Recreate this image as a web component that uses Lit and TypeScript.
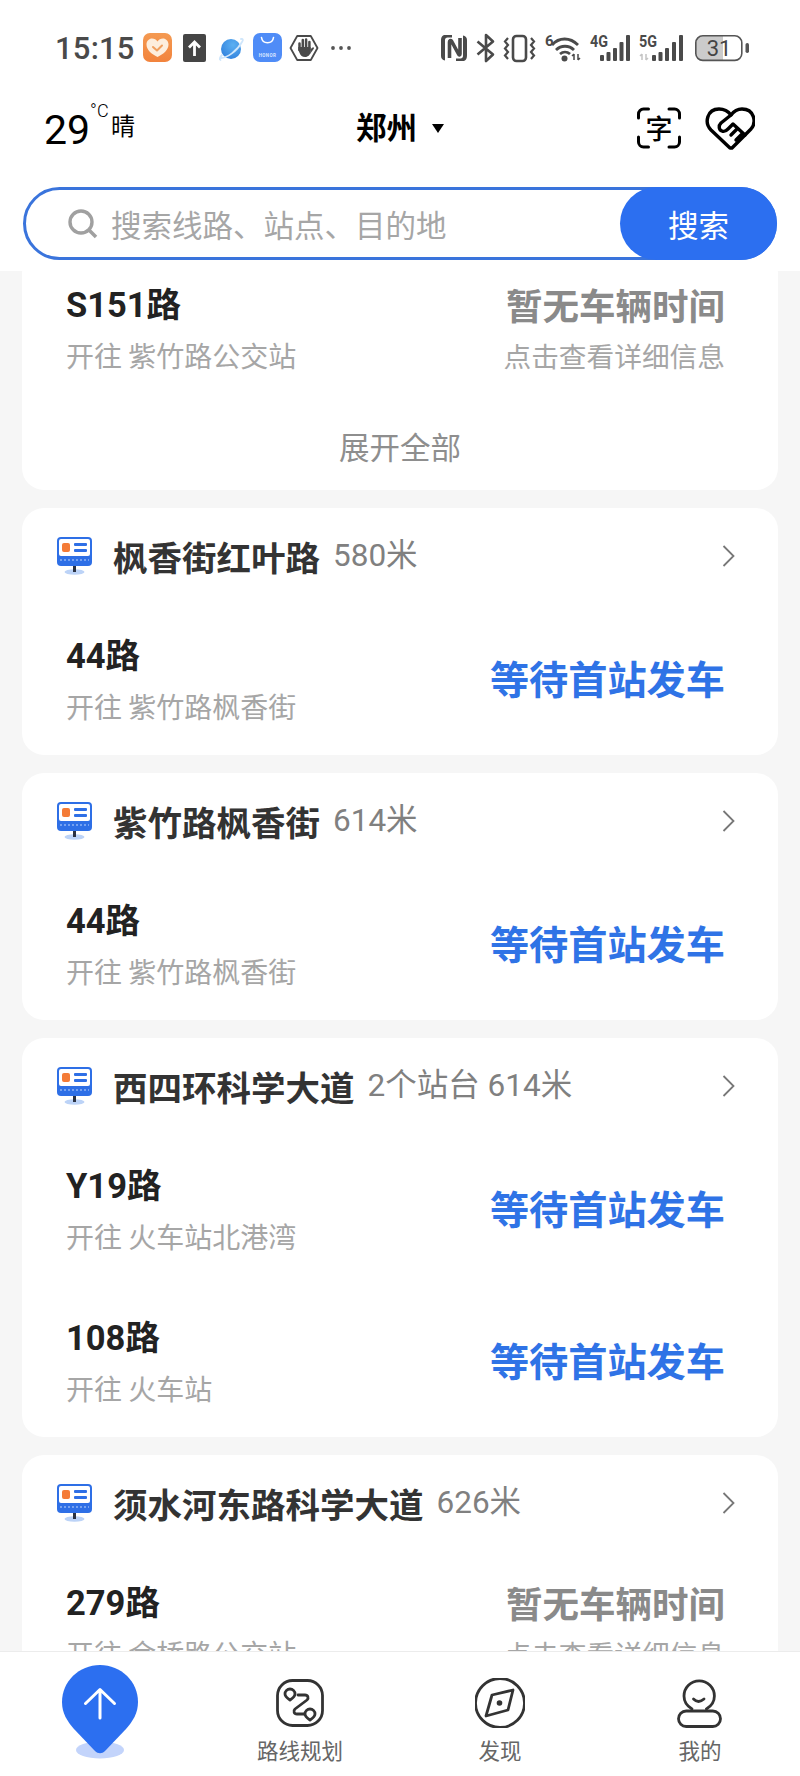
import { LitElement, html, css, svg } from "lit";
import { customElement } from "lit/decorators.js";

type Route = { name: string; dest: string; live: boolean };
type Stop = { title: string; extra: string; routes: Route[] };

const WAIT = "等待首站发车";
const NONE = "暂无车辆时间";
const stops: Stop[] = [
  { title: "枫香街红叶路", extra: "580米", routes: [{ name: "44路", dest: "开往 紫竹路枫香街", live: true }] },
  { title: "紫竹路枫香街", extra: "614米", routes: [{ name: "44路", dest: "开往 紫竹路枫香街", live: true }] },
  {
    title: "西四环科学大道",
    extra: "2个站台 614米",
    routes: [
      { name: "Y19路", dest: "开往 火车站北港湾", live: true },
      { name: "108路", dest: "开往 火车站", live: true },
    ],
  },
  { title: "须水河东路科学大道", extra: "626米", routes: [{ name: "279路", dest: "开往 金桥路公交站", live: false }] },
];

const ink = "#4a4a4a";
const bars = (xs: number[]) => {
  const tops = [55, 52, 48, 42, 35];
  return xs.map((x, i) => svg`<rect x=${x} y=${tops[i]} width="4" height=${61 - tops[i]} rx="1" fill=${ink}></rect>`);
};
const arrows = (x: number, c: string) => svg`<path d="M${x + 2} 54v6M${x} 56l2-2 M${x + 6} 54v6M${x + 8} 58l-2 2" stroke=${c} stroke-width="1.5" fill="none"></path>`;

const leftIcons = html`<svg class="strip-l" viewBox="143 30 210 36" aria-hidden="true">
  <defs>
    <linearGradient id="org" x1="0" y1="0" x2="0" y2="1"><stop offset="0" stop-color="#f49a52"></stop><stop offset="1" stop-color="#f2833c"></stop></linearGradient>
    <radialGradient id="pl" cx="0.6" cy="0.3" r="0.8"><stop offset="0" stop-color="#5cb0f2"></stop><stop offset="1" stop-color="#2f7fdc"></stop></radialGradient>
  </defs>
  <rect x="143" y="33" width="29" height="29" rx="7" fill="url(#org)"></rect>
  <path d="M157.500 57c-6-3-11-7-11-12.500 0-3.500 2.700-6 5.500-6 2.300 0 4.300 1 5.500 3 1.200-2 3.200-3 5.500-3 2.800 0 5.500 2.500 5.500 6 0 5.500-5 9.500-11 12.500z" fill="#fdeedd"></path>
  <path d="M153 47l4 3.500 5-5" stroke="#f0a060" stroke-width="2" fill="none" stroke-linecap="round" stroke-linejoin="round"></path>
  <rect x="183" y="34" width="23" height="28" rx="2" fill="#454545"></rect>
  <path d="M194.500 56V42M189 47.500l5.500-5.500 5.500 5.500" stroke="#fff" stroke-width="2.800" fill="none"></path>
  <circle cx="231" cy="49" r="10" fill="url(#pl)"></circle>
  <path d="M220.500 60c-1.500-.5-.5-3 1.500-5M241 39c2-.3 2.500 1 1 3M221 58c6 0 16-7 21-16" stroke="#cfe6fb" stroke-width="1.800" fill="none" stroke-linecap="round"></path>
  <rect x="253" y="33" width="29" height="29" rx="7" fill="#4f8cf7"></rect>
  <path d="M261.500 37.500c1 7 11 7 12 0" stroke="#fff" stroke-width="1.600" fill="none" stroke-linecap="round"></path>
  <text x="267.500" y="57" text-anchor="middle" font-family="Roboto, sans-serif" font-size="4.500" font-weight="700" letter-spacing=".4" fill="#dbe8ff">HONOR</text>
  <path d="M290.500 48l6.700-12h13.600l6.700 12-6.700 12h-13.600z" fill="#fff" stroke=${ink} stroke-width="1.800" stroke-linejoin="round"></path>
  <path d="M299.500 50V43.500M302.800 50V40M306.100 50V39.500M309.400 50V42" stroke=${ink} stroke-width="2.500" stroke-linecap="round" fill="none"></path>
  <path d="M298.300 47h12.300v4.500c0 3-2.500 5.500-5.500 5.500-3 0-4.500-1.500-5.500-4l-1.300-3z" fill=${ink}></path>
  <path d="M310.600 49l2-1.500c1-.6 1.700.4 1.200 1.200L310 54z" fill=${ink}></path>
  <circle cx="333" cy="48" r="1.900" fill="#555"></circle><circle cx="341" cy="48" r="1.900" fill="#555"></circle><circle cx="349" cy="48" r="1.900" fill="#555"></circle>
</svg>`;

const rightIcons = html`<svg class="strip-r" viewBox="441 30 312 36" aria-hidden="true">
  <path d="M445 35h7v2.500h-4.500c-1.500 0-2.500 1-2.500 2.500v20.500c-2.500-.5-4-2-4-4.500V41c0-3.500 1-6 4-6zM463 61h-7v-2.500h4.500c1.500 0 2.500-1 2.500-2.500V35.500c2.500.5 4 2 4 4.500v15c0 3.500-1 6-4 6z" fill=${ink}></path>
  <path d="M449.500 58V42c0-1.500 1-2 2-1l7 13c.7 1.500 1.500 1 1.500 0V38" stroke=${ink} stroke-width="3.600" fill="none" stroke-linejoin="round"></path>
  <path d="M477.500 41.500l15.500 13-7 6.500V35l7 6.500-15.500 13" stroke=${ink} stroke-width="2.600" fill="none" stroke-linejoin="round"></path>
  <rect x="513" y="36" width="13" height="25" rx="3.500" fill="none" stroke=${ink} stroke-width="2.600"></rect>
  <path d="M508 38l-3 3.500 3 3.500-3 3.500 3 3.500-3 3.500 3 3.500M531 38l3 3.500-3 3.500 3 3.500-3 3.500 3 3.500-3 3.500" stroke=${ink} stroke-width="2.200" fill="none"></path>
  <text x="545" y="46" font-family="Roboto, sans-serif" font-size="15" font-weight="700" fill=${ink}>6</text>
  <path d="M552 45c7-8 18-8 26 0M556 50c5-5 13-5 18 0M560 54c3-2.500 7-2.500 10 0" stroke=${ink} stroke-width="2.800" fill="none"></path>
  <circle cx="564.500" cy="58.500" r="3" fill=${ink}></circle>
  ${arrows(572, ink)}
  <text x="590" y="47" font-family="Roboto, sans-serif" font-size="16" font-weight="700" textLength="18" lengthAdjust="spacingAndGlyphs" fill=${ink}>4G</text>
  ${bars([600, 606.5, 613, 619.5, 626])}
  <text x="639" y="47" font-family="Roboto, sans-serif" font-size="16" font-weight="700" textLength="18" lengthAdjust="spacingAndGlyphs" fill=${ink}>5G</text>
  ${arrows(640, "#c4c4c4")}
  ${bars([652, 658.5, 665, 672, 679])}
  <path d="M702 36h21v24h-21a6 6 0 01-6-6V42a6 6 0 016-6z" fill="#cbcbcb"></path>
  <rect x="695.800" y="35.800" width="46" height="24.600" rx="7" fill="none" stroke="#555" stroke-width="1.600"></rect>
  <text x="719" y="56" text-anchor="middle" font-family="Roboto, sans-serif" font-size="22" fill="#444">31</text>
  <rect x="745.500" y="43" width="3.500" height="10" rx="1.700" fill="#555"></rect>
</svg>`;

const scanIcon = html`<span class="scan">
  <svg class="scan-frame" viewBox="0 0 44 42" aria-hidden="true"><path d="M1.500 11V7a5 5 0 015-5h5M32 2h5.500a5 5 0 015 5v4M42.500 30v5a5 5 0 01-5 5H32M11.500 40h-5a5 5 0 01-5-5v-5" stroke="#000" stroke-width="3" fill="none" stroke-linecap="round"></path></svg>
  <span class="scan-ch">字</span>
</span>`;

const heartIcon = html`<svg class="heart" viewBox="706 105 50 46" aria-hidden="true" fill="none" stroke="#000" stroke-width="3.400" stroke-linejoin="round" stroke-linecap="round">
  <path d="M731 148l-19-18c-7-7-4-21 8-21 5 0 9 2 12 6 3-4 7-6 11-6 12 0 15 13 9 20l-19 19z"></path>
  <path d="M732 115l-10 8c-3 3-2 7 1 8 2 1 4 0 6-2l5-5 12 11M738 129l-6 6M743 134l-6 6"></path>
</svg>`;

const stopIcon = html`<svg class="stop-ic" viewBox="57 537 36 40" aria-hidden="true">
  <ellipse cx="74.500" cy="573" rx="10" ry="2.800" fill="#bcd3f7"></ellipse>
  <rect x="73" y="565" width="3" height="8" fill="#2b3242"></rect>
  <rect x="57" y="538" width="35" height="29" rx="4" fill="#2e6fe6"></rect>
  <rect x="59" y="540" width="31" height="17" rx="2" fill="#fff"></rect>
  <rect x="62" y="544" width="8" height="9" rx="2" fill="#f47b37"></rect>
  <rect x="74" y="544" width="13" height="3" rx="1" fill="#2e6fe6"></rect>
  <rect x="74" y="550" width="13" height="3" rx="1" fill="#2e6fe6"></rect>
  <path d="M60 561h29" stroke="#8fb4f5" stroke-width="1.500" stroke-dasharray="2 2"></path>
</svg>`;

const chevron = html`<svg class="chev" viewBox="0 0 13 24" aria-hidden="true"><path d="M1.500 2l10 10-10 10" stroke="#777" stroke-width="1.800" fill="none"></path></svg>`;

const pin = html`<svg class="pin" viewBox="60 1662 80 102" aria-hidden="true">
  <ellipse cx="100" cy="1750" rx="24" ry="8.500" fill="#c3d4fb"></ellipse>
  <path d="M100 1665c21 0 38 16.500 38 37 0 11-5 19-12 27l-21 22c-3 3-7 3-10 0l-21-22c-7-8-12-16-12-27 0-20.500 17-37 38-37z" fill="#2c6ff0"></path>
  <path d="M100 1718v-27M85.500 1703.500l14.500-14 14.500 14" stroke="#fff" stroke-width="3" fill="none" stroke-linecap="round" stroke-linejoin="round"></path>
</svg>`;

const routeIcon = html`<svg class="nav-ic" viewBox="274 1678 50 50" aria-hidden="true" fill="none" stroke="#333" stroke-width="2.800" stroke-linecap="round" stroke-linejoin="round">
  <rect x="276.500" y="1680.500" width="45" height="45" rx="15"></rect>
  <path d="M297 1695h7c3 0 4 3 2 5l-12 9c-2 2-1 5 2 5h7"></path>
  <path d="M289 1700c-3-2-5-4-5-6a5 5 0 0110 0c0 2-2 4-5 6zM309 1720c-3-2-5-4-5-6a5 5 0 0110 0c0 2-2 4-5 6z"></path>
</svg>`;

const compassIcon = html`<svg class="nav-ic" viewBox="475 1678 50 50" aria-hidden="true" fill="none" stroke="#333" stroke-width="2.800" stroke-linejoin="round">
  <circle cx="500" cy="1703" r="24.500"></circle>
  <path d="M513 1690l-5 20-22 6 6-21z"></path>
  <circle cx="499.500" cy="1703" r="2.800" fill="#333" stroke="none"></circle>
</svg>`;

const personIcon = html`<svg class="nav-ic" viewBox="675 1678 50 50" aria-hidden="true" fill="none" stroke="#333" stroke-width="2.800" stroke-linecap="round" stroke-linejoin="round">
  <path d="M692 1709c-5-3-8-7.500-8-13a15.200 15.200 0 0130.400 0c0 5.500-3 10-8 13"></path>
  <rect x="678.500" y="1711" width="42" height="15.500" rx="7.700"></rect>
  <path d="M693.500 1699c3 3 7 3 10.500 0"></path>
</svg>`;

@customElement("app-root")
export class AppRoot extends LitElement {
  static styles = css`
    :host {
      display: flex;
      flex-direction: column;
      width: 800px;
      height: 1776px;
      overflow: hidden;
      background: #f6f6f6;
      font-family: "Noto Sans CJK SC", "Noto Sans", sans-serif;
    }
    .top { flex: none; height: 271px; background: #fff; position: relative; z-index: 1; display: flex; flex-direction: column; }
    .status { height: 96px; display: flex; align-items: center; justify-content: space-between; padding: 0 47px 0 55px; }
    .status-l { display: flex; align-items: center; gap: 10px; }
    .time { font: 500 31px Roboto, sans-serif; color: #4a4a4a; width: 78px; letter-spacing: 0.2px; white-space: nowrap; }
    .strip-l { width: 210px; height: 36px; display: block; }
    .strip-r { width: 312px; height: 36px; display: block; }
    .bar { height: 64px; display: grid; grid-template-columns: 1fr auto 1fr; align-items: center; padding: 0 45px; margin-bottom: 27px; }
    .weather { display: flex; align-items: flex-start; color: #000; height: 50px; }
    .temp { font: 400 41px/50px Roboto, sans-serif; margin-top: 2px; margin-left: -1px; }
    .deg { font: 300 18px/20px Roboto, sans-serif; margin-top: -2px; width: 21px; }
    .sky { font-size: 24px; line-height: 30px; margin-top: 7px; }
    .city { display: flex; align-items: center; gap: 15px; font-size: 30.500px; font-weight: 700; color: #000; line-height: 40px; padding-bottom: 4px; }
    .caret { width: 0; height: 0; border-left: 6.500px solid transparent; border-right: 6.500px solid transparent; border-top: 9px solid #000; margin-top: 4px; }
    .tools { display: flex; justify-content: flex-end; align-items: center; gap: 24px; }
    .scan { position: relative; width: 44px; height: 42px; display: flex; align-items: center; justify-content: center; }
    .scan-frame { position: absolute; inset: 0; width: 44px; height: 42px; }
    .scan-ch { font-size: 27px; line-height: 30px; color: #000; font-weight: 500; }
    .heart { width: 50px; height: 46px; display: block; }
    .search { margin: 0 23px; height: 73px; box-sizing: border-box; border: 3px solid #3a74dc; border-radius: 37px; display: flex; align-items: center; position: relative; padding-left: 42px; gap: 13px; }
    .search-ic { width: 30px; height: 30px; display: block; }
    .ph { font-size: 30.500px; line-height: 40px; color: #a6a6a6; white-space: nowrap; }
    .go { position: absolute; top: -3px; right: -3px; bottom: -3px; width: 157px; border-radius: 37px; background: #2c6ff0; color: #fff; font-size: 30.500px; display: flex; align-items: center; justify-content: center; }

    .list { flex: 1; min-height: 0; overflow: hidden; padding: 0 22px; display: flex; flex-direction: column; gap: 18px; }
    .card { flex: none; background: #fff; border-radius: 22px; }
    .first { margin-top: -19px; }
    .more { height: 86px; box-sizing: border-box; padding-top: 22px; display: flex; align-items: flex-start; justify-content: center; font-size: 30.500px; line-height: 40px; color: #8e8e8e; }
    .stop-head { height: 95px; display: flex; align-items: center; padding: 0 43px 0 35px; }
    .stop-ic { width: 36px; height: 40px; display: block; margin-right: 20px; flex: none; }
    .stop-name { font-size: 34.500px; font-weight: 700; color: #333; line-height: 48px; white-space: nowrap; }
    .stop-extra { font-size: 31.500px; color: #808080; line-height: 48px; margin-left: 13px; white-space: nowrap; font-family: Roboto, "Noto Sans CJK SC", sans-serif; flex: 1; }
    .chev { width: 13px; height: 24px; display: block; flex: none; }
    .row { height: 152px; display: flex; align-items: center; justify-content: space-between; padding: 0 53px 0 44px; }
    .info { display: flex; flex-direction: column; gap: 7px; padding-top: 1px; box-sizing: border-box; height: 100%; justify-content: center; }
    .name { font-size: 34.500px; font-weight: 700; line-height: 46px; color: #222; font-family: Roboto, "Noto Sans CJK SC", sans-serif; white-space: nowrap; }
    .dest { font-size: 28px; line-height: 40px; color: #a6a6a6; white-space: nowrap; }
    .live { font-size: 39.200px; font-weight: 700; color: #2f73e6; line-height: 54px; white-space: nowrap; margin-bottom: 5px; }
    .idle { display: flex; flex-direction: column; align-items: flex-end; gap: 7px; }
    .idle-t { font-size: 36.500px; font-weight: 700; color: #8a8a8a; line-height: 46px; white-space: nowrap; }
    .idle-s { font-size: 27.700px; color: #a6a6a6; line-height: 40px; white-space: nowrap; }

    .nav { flex: none; height: 125px; box-sizing: border-box; background: #fff; border-top: 1px solid #ececec; display: grid; grid-template-columns: repeat(4, 200px); position: relative; z-index: 1; }
    .tab { display: flex; flex-direction: column; align-items: center; padding-top: 26px; gap: 7px; }
    .tab-pin { padding-top: 10px; }
    .pin { width: 80px; height: 102px; display: block; }
    .nav-ic { width: 50px; height: 50px; display: block; }
    .lbl { font-size: 21.500px; line-height: 30px; color: #666; white-space: nowrap; }
  `;

  private routeRow(r: Route) {
    return html`<div class="row">
      <div class="info"><div class="name">${r.name}</div><div class="dest">${r.dest}</div></div>
      ${r.live
        ? html`<div class="live">${WAIT}</div>`
        : html`<div class="idle"><div class="idle-t">${NONE}</div><div class="idle-s">点击查看详细信息</div></div>`}
    </div>`;
  }

  render() {
    return html`
      <div class="top">
        <div class="status">
          <div class="status-l"><span class="time">15:15</span>${leftIcons}</div>
          ${rightIcons}
        </div>
        <div class="bar">
          <div class="weather"><span class="temp">29</span><span class="deg">°C</span><span class="sky">晴</span></div>
          <div class="city">郑州<span class="caret"></span></div>
          <div class="tools">${scanIcon}${heartIcon}</div>
        </div>
        <div class="search">
          <svg class="search-ic" viewBox="0 0 30 30" aria-hidden="true"><circle cx="13" cy="13" r="11" fill="none" stroke="#a0a0a0" stroke-width="3.400"></circle><path d="M21 21l7 7" stroke="#a0a0a0" stroke-width="3.600"></path></svg>
          <span class="ph">搜索线路、站点、目的地</span>
          <div class="go">搜索</div>
        </div>
      </div>
      <div class="list">
        <div class="card first">
          ${this.routeRow({ name: "S151路", dest: "开往 紫竹路公交站", live: false })}
          <div class="more">展开全部</div>
        </div>
        ${stops.map(
          (s) => html`<div class="card">
            <div class="stop-head">
              ${stopIcon}
              <span class="stop-name">${s.title}</span>
              <span class="stop-extra">${s.extra}</span>
              ${chevron}
            </div>
            ${s.routes.map((r) => this.routeRow(r))}
          </div>`
        )}
      </div>
      <div class="nav">
        <div class="tab tab-pin">${pin}</div>
        <div class="tab">${routeIcon}<span class="lbl">路线规划</span></div>
        <div class="tab">${compassIcon}<span class="lbl">发现</span></div>
        <div class="tab">${personIcon}<span class="lbl">我的</span></div>
      </div>
    `;
  }
}
